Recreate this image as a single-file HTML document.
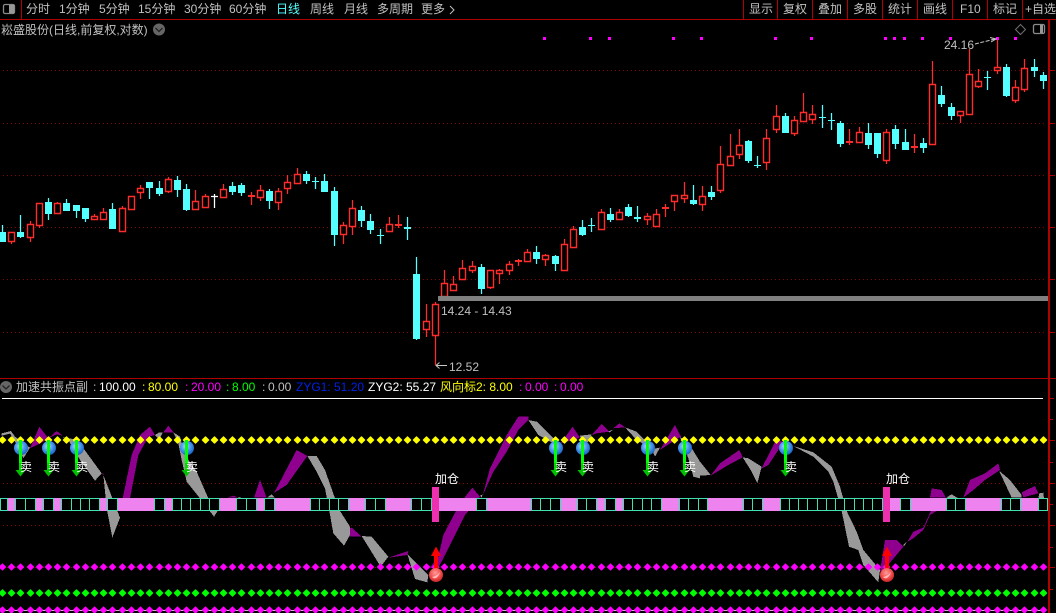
<!DOCTYPE html>
<html><head><meta charset="utf-8"><style>
html,body{margin:0;padding:0;background:#000;width:1056px;height:613px;overflow:hidden}
svg{display:block}
text{font-family:"Liberation Sans","WenQuanYi Zen Hei","Noto Sans CJK SC",sans-serif;font-size:12px;fill:#c0c0c0;white-space:pre}
</style></head><body>
<svg width="1056" height="613" viewBox="0 0 1056 613" xmlns="http://www.w3.org/2000/svg">
<defs>
<radialGradient id="bb" cx=".42" cy=".38" r=".7"><stop offset="0" stop-color="#b4dcff"/><stop offset=".45" stop-color="#4f9cf0"/><stop offset="1" stop-color="#0f58b8"/></radialGradient>
<radialGradient id="rb" cx=".45" cy=".35" r=".75"><stop offset="0" stop-color="#ff9a9a"/><stop offset=".55" stop-color="#f04848"/><stop offset="1" stop-color="#b01818"/></radialGradient>
<path id="dm" d="M2.5-3l3 3-3 3-3-3zM11.5-3l3 3-3 3-3-3zM20.5-3l3 3-3 3-3-3zM30.5-3l3 3-3 3-3-3zM39.5-3l3 3-3 3-3-3zM48.5-3l3 3-3 3-3-3zM57.5-3l3 3-3 3-3-3zM66.5-3l3 3-3 3-3-3zM76.5-3l3 3-3 3-3-3zM85.5-3l3 3-3 3-3-3zM94.5-3l3 3-3 3-3-3zM103.5-3l3 3-3 3-3-3zM112.5-3l3 3-3 3-3-3zM122.5-3l3 3-3 3-3-3zM131.5-3l3 3-3 3-3-3zM140.5-3l3 3-3 3-3-3zM149.5-3l3 3-3 3-3-3zM159.5-3l3 3-3 3-3-3zM168.5-3l3 3-3 3-3-3zM177.5-3l3 3-3 3-3-3zM186.5-3l3 3-3 3-3-3zM195.5-3l3 3-3 3-3-3zM205.5-3l3 3-3 3-3-3zM214.5-3l3 3-3 3-3-3zM223.5-3l3 3-3 3-3-3zM232.5-3l3 3-3 3-3-3zM241.5-3l3 3-3 3-3-3zM251.5-3l3 3-3 3-3-3zM260.5-3l3 3-3 3-3-3zM269.5-3l3 3-3 3-3-3zM278.5-3l3 3-3 3-3-3zM287.5-3l3 3-3 3-3-3zM297.5-3l3 3-3 3-3-3zM306.5-3l3 3-3 3-3-3zM315.5-3l3 3-3 3-3-3zM324.5-3l3 3-3 3-3-3zM334.5-3l3 3-3 3-3-3zM343.5-3l3 3-3 3-3-3zM352.5-3l3 3-3 3-3-3zM361.5-3l3 3-3 3-3-3zM370.5-3l3 3-3 3-3-3zM380.5-3l3 3-3 3-3-3zM389.5-3l3 3-3 3-3-3zM398.5-3l3 3-3 3-3-3zM407.5-3l3 3-3 3-3-3zM416.5-3l3 3-3 3-3-3zM426.5-3l3 3-3 3-3-3zM435.5-3l3 3-3 3-3-3zM444.5-3l3 3-3 3-3-3zM453.5-3l3 3-3 3-3-3zM462.5-3l3 3-3 3-3-3zM472.5-3l3 3-3 3-3-3zM481.5-3l3 3-3 3-3-3zM490.5-3l3 3-3 3-3-3zM499.5-3l3 3-3 3-3-3zM509.5-3l3 3-3 3-3-3zM518.5-3l3 3-3 3-3-3zM527.5-3l3 3-3 3-3-3zM536.5-3l3 3-3 3-3-3zM545.5-3l3 3-3 3-3-3zM555.5-3l3 3-3 3-3-3zM564.5-3l3 3-3 3-3-3zM573.5-3l3 3-3 3-3-3zM582.5-3l3 3-3 3-3-3zM591.5-3l3 3-3 3-3-3zM601.5-3l3 3-3 3-3-3zM610.5-3l3 3-3 3-3-3zM619.5-3l3 3-3 3-3-3zM628.5-3l3 3-3 3-3-3zM637.5-3l3 3-3 3-3-3zM647.5-3l3 3-3 3-3-3zM656.5-3l3 3-3 3-3-3zM665.5-3l3 3-3 3-3-3zM674.5-3l3 3-3 3-3-3zM684.5-3l3 3-3 3-3-3zM693.5-3l3 3-3 3-3-3zM702.5-3l3 3-3 3-3-3zM711.5-3l3 3-3 3-3-3zM720.5-3l3 3-3 3-3-3zM730.5-3l3 3-3 3-3-3zM739.5-3l3 3-3 3-3-3zM748.5-3l3 3-3 3-3-3zM757.5-3l3 3-3 3-3-3zM766.5-3l3 3-3 3-3-3zM776.5-3l3 3-3 3-3-3zM785.5-3l3 3-3 3-3-3zM794.5-3l3 3-3 3-3-3zM803.5-3l3 3-3 3-3-3zM812.5-3l3 3-3 3-3-3zM822.5-3l3 3-3 3-3-3zM831.5-3l3 3-3 3-3-3zM840.5-3l3 3-3 3-3-3zM849.5-3l3 3-3 3-3-3zM859.5-3l3 3-3 3-3-3zM868.5-3l3 3-3 3-3-3zM877.5-3l3 3-3 3-3-3zM886.5-3l3 3-3 3-3-3zM895.5-3l3 3-3 3-3-3zM905.5-3l3 3-3 3-3-3zM914.5-3l3 3-3 3-3-3zM923.5-3l3 3-3 3-3-3zM932.5-3l3 3-3 3-3-3zM941.5-3l3 3-3 3-3-3zM951.5-3l3 3-3 3-3-3zM960.5-3l3 3-3 3-3-3zM969.5-3l3 3-3 3-3-3zM978.5-3l3 3-3 3-3-3zM987.5-3l3 3-3 3-3-3zM997.5-3l3 3-3 3-3-3zM1006.5-3l3 3-3 3-3-3zM1015.5-3l3 3-3 3-3-3zM1024.5-3l3 3-3 3-3-3zM1034.5-3l3 3-3 3-3-3zM1043.5-3l3 3-3 3-3-3z"/>
<g id="sell">
<circle cx="0" cy="8" r="7" fill="url(#bb)"/>
<rect x="-2" y="0" width="3" height="23" fill="#00ff00" shape-rendering="crispEdges"/>
<rect x="-2" y="23" width="3" height="8" fill="#00d800" shape-rendering="crispEdges"/>
<path d="M-5.5 30H4.5L-.5 36.5z" fill="#00c000"/>
<text x="-1" y="31" style="fill:#fff">卖</text>
</g>
<g id="buy">
<rect x="-2" y="553" width="4" height="16" fill="#ff0000" shape-rendering="crispEdges"/>
<path d="M0 546.5L5 556H-5z" fill="#ff0000"/>
<circle cx="0" cy="575" r="7" fill="url(#rb)"/>
<path d="M-4 577Q1 576 4 572Q3 576 0 578Q-2 579-4 577z" fill="#ffb8b8"/>
</g>
</defs>

<!-- red frame -->
<g fill="#b00000" shape-rendering="crispEdges">
<rect x="0" y="19" width="1056" height="1"/>
<rect x="21" y="0" width="1" height="19"/>
<rect x="743" y="0" width="1" height="19"/><rect x="777" y="0" width="1" height="19"/><rect x="812" y="0" width="1" height="19"/><rect x="847" y="0" width="1" height="19"/><rect x="882" y="0" width="1" height="19"/><rect x="917" y="0" width="1" height="19"/><rect x="952" y="0" width="1" height="19"/><rect x="987" y="0" width="1" height="19"/><rect x="1022" y="0" width="1" height="19"/>
<rect x="0" y="378" width="1056" height="1"/>
<rect x="1048" y="20" width="2" height="593"/>
<path d="M1050 70h5v1h-5zM1050 123h5v1h-5zM1050 175h5v1h-5zM1050 227h5v1h-5zM1050 279h5v1h-5zM1050 332h5v1h-5zM1050 398h4v1h-4zM1050 419h3v1h-3zM1050 440h5v1h-5zM1050 462h3v1h-3zM1050 483h5v1h-5zM1050 504h3v1h-3zM1050 525h5v1h-5zM1050 547h3v1h-3zM1050 567h5v1h-5zM1050 589h3v1h-3z"/>
</g>

<!-- dotted grids -->
<g stroke="#860000" stroke-width="1" stroke-dasharray="1 3" fill="none" shape-rendering="crispEdges">
<path d="M3 70.5H1046M3 123.5H1046M3 175.5H1046M3 227.5H1046M3 279.5H1046M3 332.5H1046M3 483.5H1046M3 525.5H1046M3 567.5H1046"/>
</g>

<!-- top-left icon -->
<rect x="3.5" y="4.5" width="11" height="9" rx="1.5" fill="none" stroke="#8a8a8a" stroke-width="1.3"/>
<rect x="9" y="5" width="5" height="8" fill="#989898"/>
<!-- top-right icons -->
<path d="M1020.5 24.5l5 5-5 5-5-5z" fill="none" stroke="#707070"/>
<rect x="1033.5" y="24.5" width="11" height="9" rx="1.5" fill="none" stroke="#8a8a8a" stroke-width="1.3"/>
<rect x="1040" y="25" width="3" height="8" fill="#989898"/>

<!-- toolbar text -->
<text x="26" y="13">分时</text>
<text x="59" y="13">1分钟</text>
<text x="99" y="13">5分钟</text>
<text x="138" y="13">15分钟</text>
<text x="184" y="13">30分钟</text>
<text x="229" y="13">60分钟</text>
<text x="276" y="13" style="fill:#54ffff">日线</text>
<text x="310" y="13">周线</text>
<text x="344" y="13">月线</text>
<text x="377" y="13">多周期</text>
<text x="421" y="13">更多</text>
<path d="M450 6l4 4-4 4" fill="none" stroke="#c0c0c0"/>
<text x="749" y="13">显示</text>
<text x="783" y="13">复权</text>
<text x="818" y="13">叠加</text>
<text x="853" y="13">多股</text>
<text x="888" y="13">统计</text>
<text x="923" y="13">画线</text>
<text x="960" y="13">F10</text>
<text x="993" y="13">标记</text>
<text x="1025" y="13">+自选</text>

<!-- title -->
<text x="1" y="34">崧盛股份(日线,前复权,对数)</text>
<circle cx="159" cy="29.5" r="6" fill="#666"/>
<path d="M155.5 28l3.5 3.5 3.5-3.5" fill="none" stroke="#222" stroke-width="1.3"/>

<!-- magenta signal squares -->
<path fill="#ff00ff" shape-rendering="crispEdges" d="M543 37h3v3h-3zM589 37h3v3h-3zM608 37h3v3h-3zM672 37h3v3h-3zM700 37h3v3h-3zM774 37h3v3h-3zM810 37h3v3h-3zM884 37h3v3h-3zM893 37h3v3h-3zM903 37h3v3h-3zM921 37h3v3h-3zM949 37h3v3h-3zM996 37h3v3h-3zM1014 37h3v3h-3z"/>

<!-- red candles -->
<g>
<path fill="none" stroke="#ff2c2c" stroke-width="1.25" d="M11.5 232V244M30.5 221V242M39.5 203V228M57.5 202V214M94.5 214V220M103.5 208V219M122.5 206V231M131.5 196V209M140.5 185V199M168.5 177V193M195.5 190V210M205.5 194V207M223.5 184V197M251.5 192V205M260.5 185V201M278.5 188V210M287.5 175V194M297.5 168V183M343.5 222V244M352.5 200V235M389.5 217V231M398.5 215V228M426.5 304V337M435.5 302V365M444.5 270V296M453.5 276V290M462.5 260V279M472.5 261V273M490.5 270V289M499.5 269V284M509.5 261V275M518.5 259V266M527.5 249V261M545.5 254V266M564.5 239V270M573.5 226V247M601.5 209V229M619.5 209V220M647.5 213V225M656.5 209V226M665.5 204V217M674.5 195V211M684.5 182V203M702.5 186V211M720.5 146V193M730.5 134V165M739.5 129V159M766.5 129V170M776.5 105V133M794.5 116V136M803.5 93V121M812.5 105V124M849.5 129V145M859.5 127V142M886.5 129V164M914.5 134V153M932.5 61V144M960.5 111V123M969.5 49V114M978.5 69V88M997.5 40V74M1015.5 80V103M1024.5 59V92"/>
<path fill="#000" stroke="#ff2c2c" stroke-width="1.4" d="M8.5 232.5h6V241.5h-6zM27.5 224.5h6V237.5h-6zM36.5 203.5h6V225.5h-6zM54.5 203.5h6V213.5h-6zM91.5 216.5h6V219.5h-6zM100.5 212.5h6V219.5h-6zM119.5 208.5h6V231.5h-6zM128.5 196.5h6V209.5h-6zM137.5 188.5h6V192.5h-6zM165.5 179.5h6V191.5h-6zM192.5 201.5h6V209.5h-6zM202.5 196.5h6V207.5h-6zM220.5 189.5h6V197.5h-6zM257.5 190.5h6V197.5h-6zM275.5 191.5h6V202.5h-6zM284.5 182.5h6V188.5h-6zM294.5 174.5h6V183.5h-6zM340.5 225.5h6V234.5h-6zM349.5 208.5h6V226.5h-6zM386.5 224.5h6V231.5h-6zM423.5 321.5h6V329.5h-6zM432.5 304.5h6V335.5h-6zM441.5 283.5h6V296.5h-6zM450.5 284.5h6V290.5h-6zM459.5 268.5h6V279.5h-6zM469.5 266.5h6V270.5h-6zM487.5 270.5h6V287.5h-6zM496.5 270.5h6V273.5h-6zM506.5 264.5h6V270.5h-6zM524.5 252.5h6V261.5h-6zM542.5 255.5h6V259.5h-6zM561.5 244.5h6V270.5h-6zM570.5 229.5h6V247.5h-6zM598.5 212.5h6V229.5h-6zM616.5 212.5h6V219.5h-6zM644.5 216.5h6V219.5h-6zM653.5 214.5h6V226.5h-6zM671.5 195.5h6V201.5h-6zM681.5 195.5h6V198.5h-6zM699.5 196.5h6V204.5h-6zM717.5 164.5h6V190.5h-6zM727.5 156.5h6V165.5h-6zM736.5 145.5h6V154.5h-6zM763.5 138.5h6V162.5h-6zM773.5 116.5h6V129.5h-6zM791.5 120.5h6V133.5h-6zM800.5 112.5h6V121.5h-6zM809.5 114.5h6V119.5h-6zM856.5 132.5h6V142.5h-6zM883.5 132.5h6V160.5h-6zM929.5 84.5h6V144.5h-6zM957.5 111.5h6V115.5h-6zM966.5 74.5h6V114.5h-6zM975.5 81.5h6V86.5h-6zM994.5 67.5h6V70.5h-6zM1012.5 87.5h6V100.5h-6zM1021.5 68.5h6V89.5h-6z"/>
<path fill="#ff2c2c" d="M248 195h7v2h-7zM395 224h7v2h-7zM515 260h7v2h-7zM662 207h7v2h-7zM846 141h7v2h-7zM911 146h7v2h-7z"/>
<!-- cyan candles -->
<path fill="none" stroke="#54ffff" stroke-width="1.25" d="M2.5 225V241M20.5 215V238M48.5 198V220M66.5 199V211M76.5 205V218M85.5 208V222M112.5 203V229M149.5 182V199M159.5 181V196M177.5 176V197M186.5 184V211M232.5 182V195M241.5 183V196M269.5 189V209M306.5 171V184M324.5 174V192M334.5 187V246M361.5 206V227M370.5 214V234M416.5 257V340M481.5 264V294M536.5 246V264M555.5 255V271M582.5 220V236M610.5 208V222M628.5 204V217M637.5 206V222M693.5 185V205M711.5 186V200M748.5 140V163M785.5 113V132M840.5 121V147M868.5 123V149M877.5 133V158M895.5 125V149M905.5 129V150M923.5 138V153M941.5 86V107M951.5 103V120M1006.5 64V97M1034.5 59V77M1043.5 72V89M315.5 177V189M380.5 229V244M407.5 217V240M591.5 218V232M757.5 156V168M822.5 105V128M831.5 113V130M987.5 71V90"/>
<path fill="#54ffff" d="M-1 232h7V242h-7zM17 232h7V237h-7zM45 202h7V214h-7zM63 203h7V211h-7zM73 205h7V211h-7zM82 208h7V219h-7zM109 209h7V229h-7zM146 182h7V188h-7zM156 188h7V194h-7zM174 180h7V190h-7zM183 189h7V210h-7zM229 186h7V192h-7zM238 185h7V193h-7zM266 191h7V201h-7zM303 174h7V181h-7zM321 181h7V192h-7zM331 191h7V235h-7zM358 210h7V221h-7zM367 221h7V230h-7zM413 274h7V339h-7zM478 267h7V289h-7zM533 252h7V259h-7zM552 256h7V264h-7zM579 227h7V235h-7zM607 214h7V220h-7zM625 207h7V216h-7zM634 217h7V219h-7zM690 200h7V204h-7zM708 192h7V197h-7zM745 141h7V161h-7zM782 116h7V133h-7zM837 123h7V144h-7zM865 133h7V145h-7zM874 133h7V154h-7zM892 129h7V144h-7zM902 142h7V150h-7zM920 143h7V148h-7zM938 95h7V104h-7zM948 107h7V116h-7zM1003 67h7V96h-7zM1031 67h7V71h-7zM1040 75h7V81h-7zM312 181h7v1h-7zM377 235h7v1h-7zM404 227h7v2h-7zM588 225h7v1h-7zM754 165h7v1h-7zM819 117h7v1h-7zM828 120h7v1h-7zM984 77h7v1h-7z"/>
<path fill="none" stroke="#fff" stroke-width="1.25" d="M214.5 194V208M211 196.5h7"/>
</g>

<!-- gray range bar + labels -->
<rect x="438" y="296" width="610" height="5" fill="#808080" shape-rendering="crispEdges"/>
<text x="441" y="315">14.24 - 14.43</text>
<text x="449" y="371">12.52</text>
<path d="M447 365.5H436M439.5 362.5L436 365.5L439.5 368.5" fill="none" stroke="#c8c8c8"/>
<text x="944" y="49">24.16</text>
<path d="M975 44L995 39" fill="none" stroke="#c8c8c8" stroke-dasharray="4 1.5"/>
<path d="M990 37.5L996 39L991 42" fill="none" stroke="#c8c8c8"/>

<!-- indicator header -->
<circle cx="6" cy="387" r="6" fill="#666"/>
<path d="M2.5 385.5l3.5 3.5 3.5-3.5" fill="none" stroke="#222" stroke-width="1.3"/>
<text x="16" y="391">加速共振点副</text>
<text x="93" y="391">:</text><text x="99" y="391" style="fill:#fff">100.00</text>
<text x="142" y="391" style="fill:#ffff00">:</text><text x="148" y="391" style="fill:#ffff00">80.00</text>
<text x="185" y="391" style="fill:#ff00ff">:</text><text x="191" y="391" style="fill:#ff00ff">20.00</text>
<text x="226" y="391" style="fill:#00ff00">:</text><text x="232" y="391" style="fill:#00ff00">8.00</text>
<text x="262" y="391">:</text><text x="268" y="391">0.00</text>
<text x="296" y="391" style="fill:#0020e8">ZYG1: 51.20</text>
<text x="368" y="391" style="fill:#fff">ZYG2: 55.27</text>
<text x="440" y="391" style="fill:#ffff00">风向标2: 8.00</text>
<text x="519" y="391" style="fill:#ff00ff">:</text><text x="525" y="391" style="fill:#ff00ff">0.00</text>
<text x="554" y="391" style="fill:#ff00ff">:</text><text x="560" y="391" style="fill:#ff00ff">0.00</text>
<rect x="2" y="398" width="1041" height="1" fill="#fff" shape-rendering="crispEdges"/>

<!-- ribbons -->
<g shape-rendering="crispEdges">
<g transform="translate(0,375) scale(.33333)">
<g fill="#999">
<path d="M5 175L33 168 45 185 90 218 70 250 58 225 40 190 30 176 5 182z"/>
<path d="M188 186L232 195 305 295 285 317 240 255 205 195z"/>
<path d="M310 300L360 428 337 488 320 400z"/>
<path d="M465 180L478 172 488 172 478 195z"/>
<path d="M520 172L540 185 555 240 590 290 625 370 655 405 642 425 600 370 560 320 545 255 535 205z"/>
<path d="M715 366L730 370 715 372z"/>
<path d="M800 368L815 358 825 368z"/>
<path d="M922 243L950 243 975 285 1005 370 1020 408 1050 455 1050 480 1032 512 1000 475 988 408 975 340 950 290z"/>
</g>
<g fill="#90008f">
<path d="M90 220L118 155 145 190 125 203z"/>
<path d="M145 190L170 168 188 182 170 178z"/>
<path d="M368 370L395 240 420 180 450 155 465 180 445 185 415 240 390 370z"/>
<path d="M490 172L505 152 520 172z"/>
<path d="M680 368L700 362 715 368z"/>
<path d="M762 368L780 315 800 368z"/>
<path d="M820 358L890 225 922 243 860 330 825 352z"/>
<path d="M305 295L311 296 311 302z"/>
</g>
</g>
<g transform="translate(350,375) scale(.33333)">
<g fill="#999">
<path d="M35 483L65 485 115 545 92 575z"/>
<path d="M172 537L235 600 232 622 195 612z"/>
<path d="M390 362L398 358 395 368z"/>
<path d="M535 135L560 140 610 190 610 205 565 180z"/>
<path d="M690 182L725 178 720 195 700 215z"/>
<path d="M770 170L788 165 780 172z"/>
<path d="M825 157L860 170 905 215 920 245 910 225 860 195z"/>
<path d="M905 222L930 218 915 245z"/>
<path d="M990 187L1010 195 1050 260 1050 310 1030 305 1015 250z"/>
</g>
<g fill="#90008f">
<path d="M0 460L5 458 35 485 0 485z"/>
<path d="M115 548L175 528 172 540z"/>
<path d="M240 578L265 545 280 480 330 385 367 338 390 365 375 385 345 420 300 510 262 585z"/>
<path d="M398 362L420 280 470 180 505 125 535 125 535 135 505 165 470 230 430 290z"/>
<path d="M632 205L668 155 690 188 670 195z"/>
<path d="M725 180L755 147 778 170 740 175z"/>
<path d="M790 160L808 145 825 157z"/>
<path d="M930 225L975 150 993 185 960 205z"/>
</g>
</g>
<g transform="translate(700,375) scale(.33333)">
<g fill="#999">
<path d="M0 260L32 300 0 302z"/>
<path d="M128 247L145 250 185 275 172 325 155 290z"/>
<path d="M280 213L340 232 395 275 420 335 440 408 470 470 490 525 540 585 535 622 490 570 475 525 447 515 425 408 400 320 385 290 340 245z"/>
<path d="M610 510L620 500 612 515z"/>
<path d="M738 368L755 358 775 370z"/>
<path d="M897 287L930 315 965 360 965 368 935 368z"/>
<path d="M1018 355L1030 353 1032 370 1015 368z"/>
</g>
<g fill="#90008f">
<path d="M32 302L60 265 118 225 128 247 85 270z"/>
<path d="M185 280L228 195 248 200 235 225 205 270z"/>
<path d="M555 495L590 495 610 515 560 575 540 590z"/>
<path d="M622 500L640 470 670 458 710 370 710 408 690 420 670 465 640 490z"/>
<path d="M690 368L695 340 725 345 738 368z"/>
<path d="M790 368L810 315 855 295 895 265 900 285 855 315 820 345z"/>
<path d="M965 352L1005 333 1015 355 970 367z"/>
</g>
</g>
</g>

<!-- strip -->
<g shape-rendering="crispEdges">
<rect x="0" y="498" width="1048" height="13" fill="#ee82ee"/>
<path fill="#000" stroke="#40e0b0" d="M0.5 498.5H7.5V510.5H0.5zM15.5 498.5H25.5V510.5H15.5zM25.5 498.5H35.5V510.5H25.5zM43.5 498.5H53.5V510.5H43.5zM61.5 498.5H71.5V510.5H61.5zM71.5 498.5H80.5V510.5H71.5zM80.5 498.5H89.5V510.5H80.5zM89.5 498.5H99.5V510.5H89.5zM107.5 498.5H117.5V510.5H107.5zM154.5 498.5H164.5V510.5H154.5zM172.5 498.5H181.5V510.5H172.5zM181.5 498.5H190.5V510.5H181.5zM190.5 498.5H200.5V510.5H190.5zM200.5 498.5H209.5V510.5H200.5zM209.5 498.5H219.5V510.5H209.5zM236.5 498.5H246.5V510.5H236.5zM246.5 498.5H256.5V510.5H246.5zM264.5 498.5H274.5V510.5H264.5zM310.5 498.5H319.5V510.5H310.5zM319.5 498.5H329.5V510.5H319.5zM329.5 498.5H338.5V510.5H329.5zM338.5 498.5H348.5V510.5H338.5zM365.5 498.5H375.5V510.5H365.5zM375.5 498.5H385.5V510.5H375.5zM411.5 498.5H421.5V510.5H411.5zM421.5 498.5H431.5V510.5H421.5zM476.5 498.5H486.5V510.5H476.5zM531.5 498.5H540.5V510.5H531.5zM540.5 498.5H550.5V510.5H540.5zM550.5 498.5H560.5V510.5H550.5zM577.5 498.5H586.5V510.5H577.5zM586.5 498.5H596.5V510.5H586.5zM605.5 498.5H615.5V510.5H605.5zM623.5 498.5H632.5V510.5H623.5zM632.5 498.5H642.5V510.5H632.5zM642.5 498.5H651.5V510.5H642.5zM651.5 498.5H661.5V510.5H651.5zM679.5 498.5H688.5V510.5H679.5zM688.5 498.5H698.5V510.5H688.5zM698.5 498.5H707.5V510.5H698.5zM743.5 498.5H752.5V510.5H743.5zM752.5 498.5H762.5V510.5H752.5zM780.5 498.5H789.5V510.5H780.5zM789.5 498.5H798.5V510.5H789.5zM798.5 498.5H807.5V510.5H798.5zM807.5 498.5H817.5V510.5H807.5zM817.5 498.5H826.5V510.5H817.5zM826.5 498.5H835.5V510.5H826.5zM835.5 498.5H844.5V510.5H835.5zM844.5 498.5H854.5V510.5H844.5zM854.5 498.5H863.5V510.5H854.5zM863.5 498.5H872.5V510.5H863.5zM872.5 498.5H882.5V510.5H872.5zM900.5 498.5H910.5V510.5H900.5zM946.5 498.5H955.5V510.5H946.5zM955.5 498.5H965.5V510.5H955.5zM1001.5 498.5H1010.5V510.5H1001.5zM1010.5 498.5H1020.5V510.5H1010.5zM1038.5 498.5H1047.5V510.5H1038.5z"/>
<rect x="432" y="487" width="7" height="35" fill="#ee30b0"/>
<rect x="883" y="487" width="7" height="35" fill="#ee30b0"/>
</g>
<text x="435" y="483" style="fill:#fff">加仓</text>
<text x="886" y="483" style="fill:#fff">加仓</text>

<!-- bottom base line -->
<rect x="0" y="610" width="1043" height="1" fill="#c0c0c0" shape-rendering="crispEdges"/>

<!-- diamonds -->
<use href="#dm" y="440" fill="#ffff00" stroke="#ffff00" stroke-width="1.4" stroke-linejoin="round"/>
<use href="#dm" y="567" fill="#ff00ff" stroke="#ff00ff" stroke-width="1.2" stroke-linejoin="round"/>
<use href="#dm" y="593" fill="#00ff00" stroke="#00ff00" stroke-width="1.4" stroke-linejoin="round"/>
<use href="#dm" y="610" fill="#ff00ff" stroke="#ff00ff" stroke-width="1.2" stroke-linejoin="round"/>

<!-- signals -->
<use href="#sell" x="21" y="440"/>
<use href="#sell" x="49" y="440"/>
<use href="#sell" x="77" y="440"/>
<use href="#sell" x="187" y="440"/>
<use href="#sell" x="556" y="440"/>
<use href="#sell" x="583" y="440"/>
<use href="#sell" x="648" y="440"/>
<use href="#sell" x="685" y="440"/>
<use href="#sell" x="786" y="440"/>
<use href="#buy" x="436"/>
<use href="#buy" x="887"/>
</svg>
</body></html>
